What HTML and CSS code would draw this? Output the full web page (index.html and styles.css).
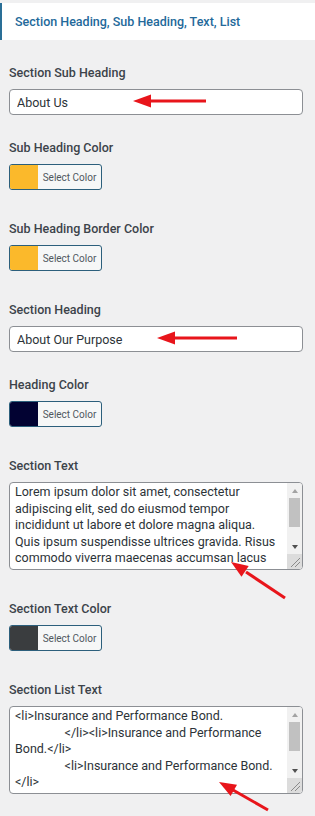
FILE: index.html
```html
<!DOCTYPE html>
<html lang="en">
<head>
    <meta charset="UTF-8">
    <meta name="viewport" content="width=device-width, initial-scale=1.0">
    <title>Section Settings</title>
    <link rel="stylesheet" href="styles.css">
</head>
<body>
    <div class="panel">
        <!-- Panel title -->
        <h3 class="panel-title">Section Heading, Sub Heading, Text, List</h3>

        <div class="fields">
            <div class="field">
                <label for="subHeading">Section Sub Heading</label>
                <input type="text" id="subHeading" value="About Us">
            </div>

            <div class="field">
                <label>Sub Heading Color</label>
                <button class="color-btn"><span class="swatch swatch-yellow"></span><span class="color-text">Select Color</span></button>
            </div>

            <div class="field">
                <label>Sub Heading Border Color</label>
                <button class="color-btn"><span class="swatch swatch-yellow"></span><span class="color-text">Select Color</span></button>
            </div>

            <div class="field">
                <label for="heading">Section Heading</label>
                <input type="text" id="heading" value="About Our Purpose">
            </div>

            <div class="field">
                <label>Heading Color</label>
                <button class="color-btn"><span class="swatch swatch-navy"></span><span class="color-text">Select Color</span></button>
            </div>

            <div class="field">
                <label for="sectionText">Section Text</label>
                <div class="textarea-wrap">
                    <textarea id="sectionText">Lorem ipsum dolor sit amet, consectetur adipiscing elit, sed do eiusmod tempor incididunt ut labore et dolore magna aliqua. Quis ipsum suspendisse ultrices gravida. Risus commodo viverra maecenas accumsan lacus vel facilisis. Lorem ipsum dolor sit amet, consectetur adipiscing elit, sed do eiusmod tempor incididunt ut labore et dolore magna aliqua.</textarea>
                    <div class="scrollbar">
                        <span class="sb-btn sb-up"></span>
                        <div class="sb-track"><span class="sb-thumb"></span></div>
                        <span class="sb-btn sb-down"></span>
                        <span class="sb-corner">
                            <svg width="15" height="15" viewBox="0 0 15 15"><path d="M4 13 L13 4 M8 13 L13 8" stroke="#8a8a8a" stroke-width="1"/></svg>
                        </span>
                    </div>
                </div>
            </div>

            <div class="field">
                <label>Section Text Color</label>
                <button class="color-btn"><span class="swatch swatch-gray"></span><span class="color-text">Select Color</span></button>
            </div>

            <div class="field">
                <label for="listText">Section List Text</label>
                <div class="textarea-wrap">
                    <textarea id="listText">&lt;li&gt;Insurance and Performance Bond.
                &lt;/li&gt;&lt;li&gt;Insurance and Performance Bond.&lt;/li&gt;
                &lt;li&gt;Insurance and Performance Bond.
&lt;/li&gt;
                &lt;li&gt;Insurance and Performance Bond.&lt;/li&gt;</textarea>
                    <div class="scrollbar">
                        <span class="sb-btn sb-up"></span>
                        <div class="sb-track"><span class="sb-thumb"></span></div>
                        <span class="sb-btn sb-down"></span>
                        <span class="sb-corner">
                            <svg width="15" height="15" viewBox="0 0 15 15"><path d="M4 13 L13 4 M8 13 L13 8" stroke="#8a8a8a" stroke-width="1"/></svg>
                        </span>
                    </div>
                </div>
            </div>
        </div>

        <!-- Red annotation arrows -->
        <svg class="arrows" width="315" height="816" viewBox="0 0 315 816">
            <g fill="#e8151b" stroke="#e8151b">
                <line x1="206" y1="101" x2="149" y2="101" stroke-width="3"/>
                <polygon points="133,101 151,94.5 151,107.5" stroke="none"/>
                <line x1="237" y1="338" x2="173" y2="338" stroke-width="3"/>
                <polygon points="157,338 175,331.5 175,344.5" stroke="none"/>
                <line x1="285" y1="598" x2="246" y2="572" stroke-width="3"/>
                <polygon points="231,562 248.7,566 241.5,576.8" stroke="none"/>
                <line x1="268" y1="810" x2="233" y2="790" stroke-width="3"/>
                <polygon points="219,782 237,784.8 230.6,796" stroke="none"/>
            </g>
        </svg>
    </div>
</body>
</html>
```

FILE: styles.css
```css
body {
    margin: 0;
    padding: 0;
    font-family: Roboto, 'Liberation Sans', sans-serif;
    background-color: #f0f0f1;
}

.panel {
    position: relative;
    width: 315px;
    min-height: 816px;
    padding-top: 3px;
    box-sizing: border-box;
}

.panel-title {
    margin: 0;
    height: 37px;
    line-height: 37px;
    padding-left: 13px;
    background-color: #fff;
    border-left: 2px solid #2a6f97;
    font-size: 12.5px;
    font-weight: 500;
    color: #23699a;
}

.fields {
    display: flex;
    flex-direction: column;
    gap: 25px;
    padding: 25px 12px 0 9px;
}

label {
    display: block;
    font-size: 12.5px;
    line-height: 16px;
    font-weight: 500;
    color: #3c434a;
    margin-bottom: 8px;
}

input[type="text"] {
    display: block;
    width: 100%;
    height: 26px;
    box-sizing: border-box;
    padding: 0 7px;
    border: 1px solid #8c8f94;
    border-radius: 4px;
    background-color: #fff;
    font-family: Roboto, 'Liberation Sans', sans-serif;
    font-size: 12.5px;
    color: #2c3338;
}

/* Color picker button */
.color-btn {
    display: flex;
    align-items: stretch;
    width: 93px;
    height: 26px;
    padding: 0;
    margin-bottom: 6px;
    border: 1px solid #2c5f7c;
    border-radius: 3px;
    background-color: #f6f7f7;
    overflow: hidden;
    cursor: pointer;
}

.swatch {
    width: 28px;
    flex-shrink: 0;
}

.swatch-yellow {
    background-color: #fbb92b;
}

.swatch-navy {
    background-color: #020232;
}

.swatch-gray {
    background-color: #3a3d3f;
}

.color-text {
    flex: 1;
    align-self: center;
    font-family: Roboto, 'Liberation Sans', sans-serif;
    font-size: 10px;
    color: #50575e;
    text-align: center;
}

/* Textarea with classic scrollbar */
.textarea-wrap {
    display: flex;
    height: 88px;
    box-sizing: border-box;
    margin-bottom: 6px;
    border: 1px solid #8c8f94;
    border-radius: 4px;
    background-color: #fff;
    overflow: hidden;
}

textarea {
    flex: 1;
    min-width: 0;
    margin: 0;
    padding: 1px 6px 2px 5px;
    border: none;
    outline: none;
    resize: none;
    overflow: hidden;
    background: transparent;
    font-family: Roboto, 'Liberation Sans', sans-serif;
    font-size: 12.5px;
    line-height: 16.5px;
    color: #2c3338;
}

.scrollbar {
    display: flex;
    flex-direction: column;
    width: 15px;
    flex-shrink: 0;
    background-color: #f1f1f1;
}

.sb-btn {
    height: 15px;
    flex-shrink: 0;
    display: flex;
    align-items: center;
    justify-content: center;
}

.sb-btn::before {
    content: "";
    width: 0;
    height: 0;
    border-left: 3.5px solid transparent;
    border-right: 3.5px solid transparent;
}

.sb-up::before {
    border-bottom: 4px solid #a3a3a3;
}

.sb-down::before {
    border-top: 4px solid #505050;
}

.sb-track {
    flex: 1;
    padding: 0 2px;
}

.sb-thumb {
    display: block;
    height: 29px;
    background-color: #c1c1c1;
}

.sb-corner {
    height: 15px;
    flex-shrink: 0;
    background-color: #dcdcdc;
}

.sb-corner svg {
    display: block;
}

.arrows {
    position: absolute;
    top: 0;
    left: 0;
    pointer-events: none;
}
```
